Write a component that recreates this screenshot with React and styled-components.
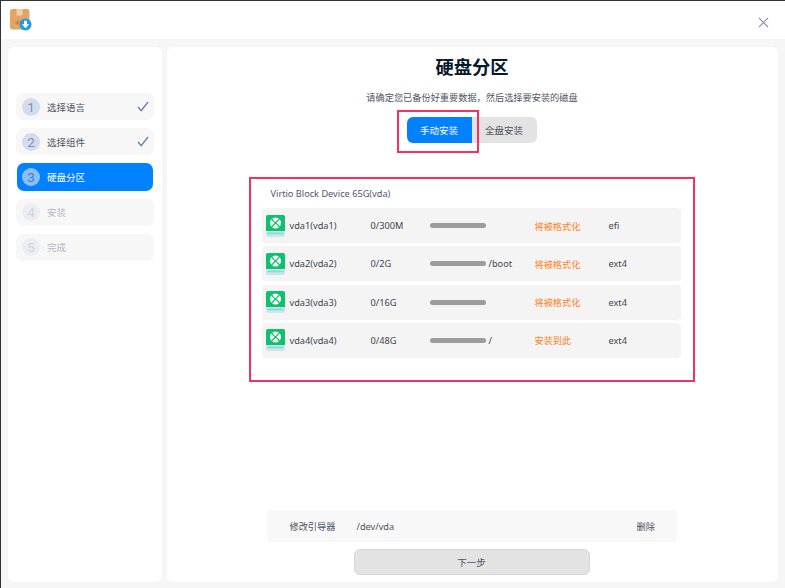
import React from 'react'
import styled, { createGlobalStyle } from 'styled-components'

const GlobalStyle = createGlobalStyle`
  html, body, #root {
    margin: 0;
    height: 100%;
  }
  body {
    background: #f6f6f6;
    font-family: 'Noto Sans', 'Noto Sans CJK SC', sans-serif;
    overflow: hidden;
  }
`

const Window = styled.div`
  display: flex;
  flex-direction: column;
  box-sizing: border-box;
  width: 785px;
  height: 588px;
  border-top: 1px solid #333;
  border-left: 1px solid #333;
  background: #f6f6f6;
`

const TitleBar = styled.header`
  display: flex;
  align-items: center;
  justify-content: space-between;
  box-sizing: border-box;
  height: 38px;
  padding: 0 16px 0 8px;
  background: #fff;
`

const CloseSlot = styled.span`
  display: flex;
  margin-top: 5px;
`

const Body = styled.div`
  flex: 1;
  display: grid;
  grid-template-columns: 154px 611px;
  gap: 5px;
  padding: 8px 0 6px 7px;
  min-height: 0;
`

const Sidebar = styled.nav`
  display: flex;
  flex-direction: column;
  gap: 8px;
  padding: 46px 8px 0;
  border-radius: 6px;
  background: #fff;
`

const Step = styled.div`
  display: flex;
  align-items: center;
  box-sizing: border-box;
  height: 27.2px;
  padding: 0 5px 0 6px;
  border-radius: 7px;
  background: ${p => (p.$state === 'active' ? '#0081ff' : '#f7f7f8')};
  margin: ${p => (p.$state === 'active' ? '0 1px' : '0')};
  color: ${p =>
    p.$state === 'active' ? '#fff' : p.$state === 'todo' ? '#b8bac0' : '#4d5360'};
  font-size: 9.5px;
`

const StepNumber = styled.span`
  display: flex;
  align-items: center;
  justify-content: center;
  width: 18px;
  height: 18px;
  margin-right: 7px;
  margin-left: ${p => (p.$state === 'active' ? '-1px' : '0')};
  border-radius: 50%;
  background: ${p =>
    p.$state === 'active' ? '#8dbff5' : p.$state === 'todo' ? '#ecedf3' : '#d3dcec'};
  color: ${p =>
    p.$state === 'active' ? '#3f7fcf' : p.$state === 'todo' ? '#ced3e2' : '#7f93bb'};
  font-family: 'Roboto', sans-serif;
  font-size: 13.5px;
`

const StepLabel = styled.span`
  flex: 1;
`

const Main = styled.main`
  display: flex;
  flex-direction: column;
  align-items: center;
  padding: 10px 2px 7px 0;
  border-radius: 6px;
  background: #fff;
`

const Title = styled.h1`
  margin: 0;
  padding-left: 1px;
  color: #06192b;
  font-size: 18.3px;
  font-weight: 700;
  line-height: 20px;
`

const Subtitle = styled.p`
  margin: 14px 0 0;
  padding-left: 1px;
  color: #4d5360;
  font-size: 9.2px;
  line-height: 14px;
`

const Toggle = styled.div`
  position: relative;
  display: flex;
  margin-top: 12px;
`

const ToggleButton = styled.button`
  width: 65px;
  height: 26px;
  padding: 0;
  border: 0;
  border-radius: ${p => (p.$active ? '6px 0 0 6px' : '0 6px 6px 0')};
  background: ${p => (p.$active ? '#0081ff' : '#e3e3e3')};
  color: ${p => (p.$active ? '#fff' : '#4d5360')};
  font-family: inherit;
  font-size: 9.5px;
`

const ToggleMark = styled.div`
  position: absolute;
  top: -7px;
  left: -10px;
  box-sizing: border-box;
  width: 82px;
  height: 43px;
  border: 2px solid #f5315f;
`

const DiskPanel = styled.section`
  box-sizing: border-box;
  width: 446px;
  height: 205px;
  margin-top: 34px;
  padding: 8px 12px 0 11px;
  border: 2px solid #f5315f;
`

const DiskName = styled.div`
  padding-left: 9px;
  color: #4d5673;
  font-size: 9.2px;
  line-height: 14px;
`

const PartitionList = styled.div`
  display: flex;
  flex-direction: column;
  gap: 3.3px;
  margin-top: 7px;
`

const Partition = styled.div`
  display: grid;
  grid-template-columns: 24px 81px 59px 59px 46px 74px 1fr;
  align-items: center;
  box-sizing: border-box;
  height: 35px;
  padding-left: 4px;
  border-radius: 4px;
  background: #f4f4f4;
  color: #3f4450;
  font-size: 9.2px;
`

const Bar = styled.span`
  display: block;
  width: 56px;
  height: 5px;
  border-radius: 3px;
  background: #9c9c9c;
`

const Status = styled.span`
  color: #ff7f1e;
`

const BootRow = styled.div`
  display: grid;
  grid-template-columns: 67px 280px 1fr;
  align-items: center;
  box-sizing: border-box;
  width: 410px;
  height: 32px;
  margin-top: auto;
  padding-left: 23px;
  border-radius: 4px;
  background: #f8f8f8;
  color: #4d5360;
  font-size: 9.2px;
`

const NextButton = styled.button`
  width: 236px;
  height: 26px;
  margin-top: 7px;
  padding: 0;
  border: 1px solid #d8d8d8;
  border-radius: 6px;
  background: #e3e3e3;
  color: #4d5360;
  font-family: inherit;
  font-size: 9.5px;
`

const AppIcon = () => (
  <svg width="24" height="24" viewBox="0 0 24 24">
    <rect x="1" y="1" width="19.5" height="20.5" rx="2.5" fill="#e3a564" />
    <rect x="7.5" y="1" width="6" height="6.5" fill="#f1cfa4" />
    <path d="M6 15l4-4-1 3 3-1-3.5 4z" fill="#c98444" />
    <circle cx="16.5" cy="16.5" r="6" fill="#1b9bf5" />
    <path d="M15 12.8h3v3.4h2.2l-3.7 4-3.7-4H15z" fill="#fff" />
  </svg>
)

const CloseIcon = () => (
  <svg width="11" height="11" viewBox="0 0 11 11">
    <path d="M1 1l9 9M10 1l-9 9" stroke="#8a95aa" strokeWidth="1.1" fill="none" />
  </svg>
)

const CheckIcon = () => (
  <svg width="12" height="11" viewBox="0 0 12 11">
    <path d="M1 6l3.2 3.6L11 1" stroke="#6482b5" strokeWidth="1.4" fill="none" />
  </svg>
)

const DiskIcon = () => (
  <svg width="19" height="22" viewBox="0 0 19 22">
    <rect x="0" y="0" width="19" height="22" rx="2" fill="#cfe6e4" />
    <path d="M0 2a2 2 0 0 1 2-2h15a2 2 0 0 1 2 2v14H0z" fill="#0fc06e" />
    <rect x="1.5" y="17.500" width="16" height="1.8" fill="#82d8ea" />
    <circle cx="9.500" cy="8" r="5.500" fill="#fff" />
    <path
      d="M5.500 3.500c1 2.200 2.400 3.500 4 4.500s3 2.300 4 4.500M13.500 3.500c-1.200 1.800-2.600 3.200-4 4.500s-2.800 2.700-4 4.500"
      fill="none"
      stroke="#0fc06e"
      strokeWidth="1.3"
    />
  </svg>
)

const steps = [
  { label: '选择语言', state: 'done' },
  { label: '选择组件', state: 'done' },
  { label: '硬盘分区', state: 'active' },
  { label: '安装', state: 'todo' },
  { label: '完成', state: 'todo' }
]

const partitions = [
  { name: 'vda1(vda1)', size: '0/300M', mount: '', status: '将被格式化', fs: 'efi' },
  { name: 'vda2(vda2)', size: '0/2G', mount: '/boot', status: '将被格式化', fs: 'ext4' },
  { name: 'vda3(vda3)', size: '0/16G', mount: '', status: '将被格式化', fs: 'ext4' },
  { name: 'vda4(vda4)', size: '0/48G', mount: '/', status: '安装到此', fs: 'ext4' }
]

const App = () => (
  <Window>
    <GlobalStyle />
    <TitleBar>
      <AppIcon />
      <CloseSlot>
        <CloseIcon />
      </CloseSlot>
    </TitleBar>
    <Body>
      <Sidebar>
        {steps.map((step, i) => (
          <Step key={step.label} $state={step.state}>
            <StepNumber $state={step.state}>{i + 1}</StepNumber>
            <StepLabel>{step.label}</StepLabel>
            {step.state === 'done' && <CheckIcon />}
          </Step>
        ))}
      </Sidebar>
      <Main>
        <Title>硬盘分区</Title>
        <Subtitle>请确定您已备份好重要数据，然后选择要安装的磁盘</Subtitle>
        <Toggle>
          <ToggleButton $active>手动安装</ToggleButton>
          <ToggleButton>全盘安装</ToggleButton>
          <ToggleMark />
        </Toggle>
        <DiskPanel>
          <DiskName>Virtio Block Device 65G(vda)</DiskName>
          <PartitionList>
            {partitions.map(p => (
              <Partition key={p.name}>
                <DiskIcon />
                <span>{p.name}</span>
                <span>{p.size}</span>
                <Bar />
                <span>{p.mount}</span>
                <Status>{p.status}</Status>
                <span>{p.fs}</span>
              </Partition>
            ))}
          </PartitionList>
        </DiskPanel>
        <BootRow>
          <span>修改引导器</span>
          <span>/dev/vda</span>
          <span>删除</span>
        </BootRow>
        <NextButton>下一步</NextButton>
      </Main>
    </Body>
  </Window>
)

export default App
